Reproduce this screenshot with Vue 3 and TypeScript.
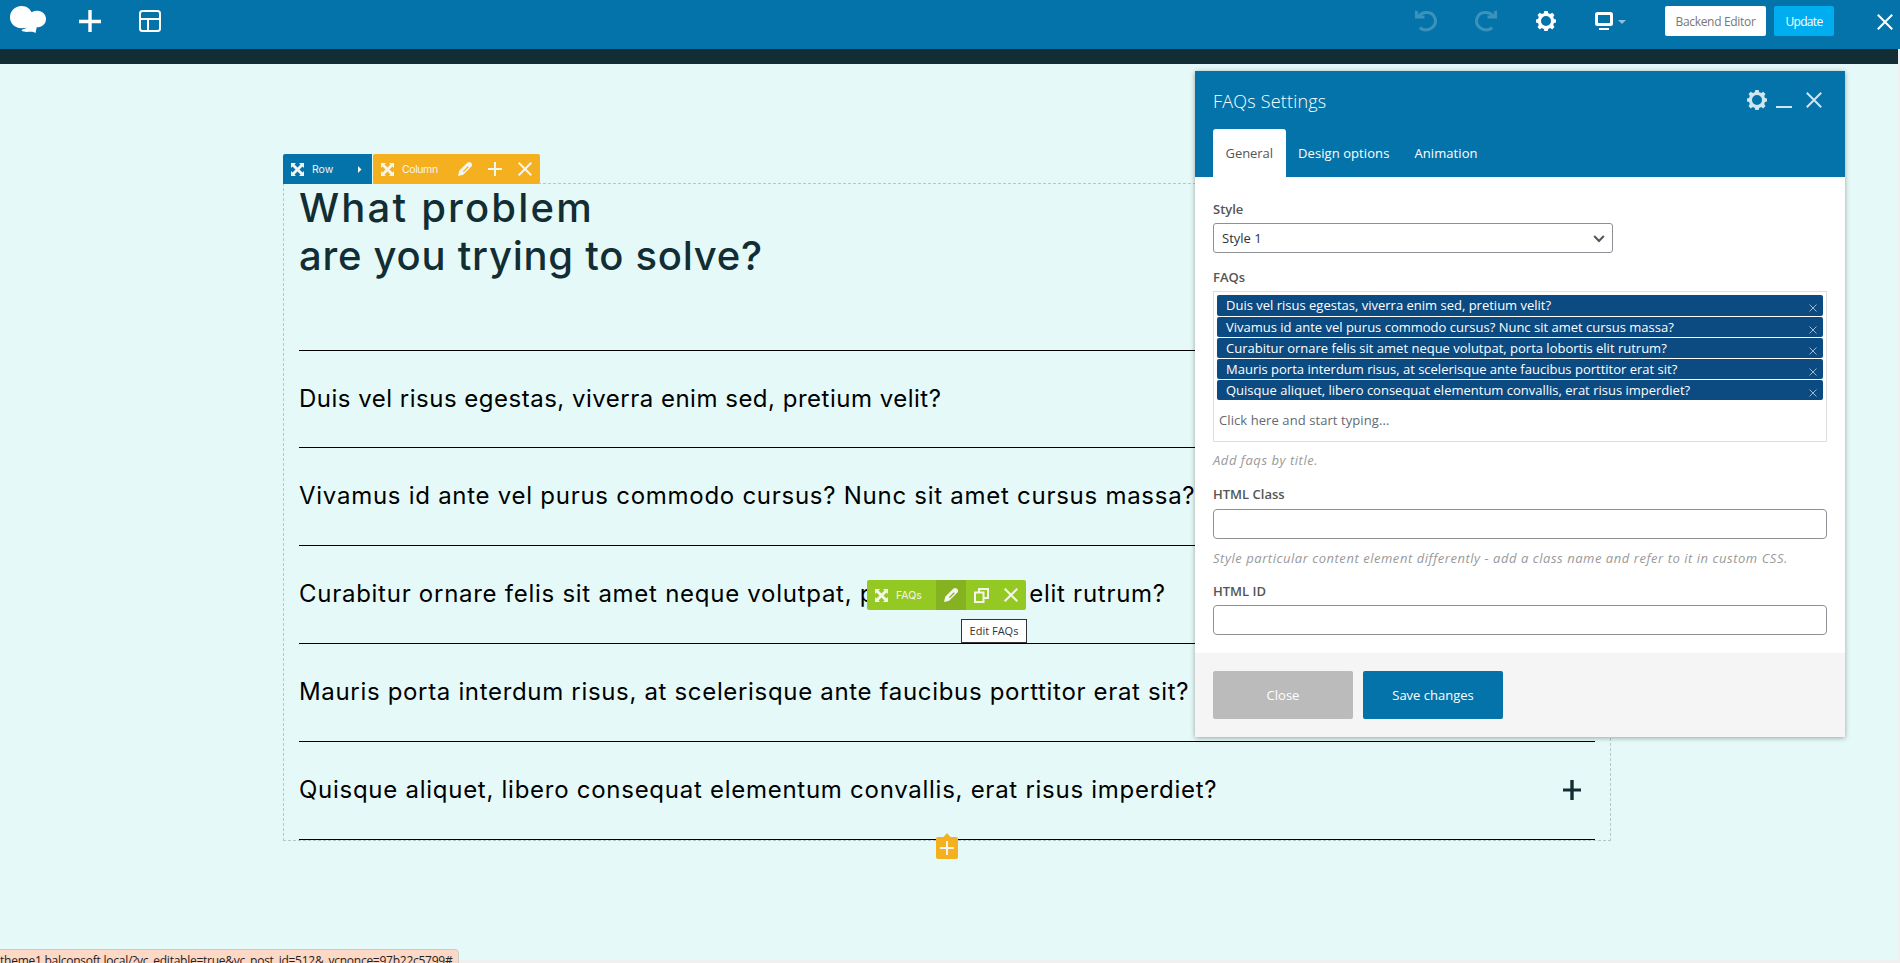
<script setup lang="ts">
import { ref } from 'vue'

const faqs: string[] = [
  'Duis vel risus egestas, viverra enim sed, pretium velit?',
  'Vivamus id ante vel purus commodo cursus? Nunc sit amet cursus massa?',
  'Curabitur ornare felis sit amet neque volutpat, porta lobortis elit rutrum?',
  'Mauris porta interdum risus, at scelerisque ante faucibus porttitor erat sit?',
  'Quisque aliquet, libero consequat elementum convallis, erat risus imperdiet?',
]
const tabs: string[] = ['General', 'Design options', 'Animation']
const activeTab = ref('General')

const gear =
  'M8.3 0h3.4l.5 2.3 2 .8 2-1.3 2.3 2.3-1.3 2 .8 2 2 .5v2.8l-2 .6-.8 2 1.3 2.1-2.3 2.3-2-1.3-2 .8-.5 2.1H8.3l-.5-2.1-2-.8-2 1.3-2.3-2.3 1.3-2.1-.8-2L0 11.400V8.600l2-.5.8-2-1.300-2 2.300-2.300 2 1.300 2-.8zM10 5a5 5 0 1 0 0 10a5 5 0 0 0 0-10z'
const move =
  'M0 0h5L3.500 1.500 6.500 4.500 9.500 1.500 8 0h5v5L11.500 3.500 8.500 6.500 11.500 9.500 13 8v5H8L9.500 11.500 6.500 8.500 3.500 11.500 5 13H0V8L1.500 9.500 4.500 6.500 1.500 3.500 0 5z'
const pencil =
  'M0 14l1.200-5.200L9 1Q11.300-.9 13.200.9T13 5L5.200 12.800zM4.900 9.200l.9.900 4.900-4.900-.9-.9z'
</script>

<template>
  <div class="screen">
    <header class="navbar">
      <svg class="logo" width="36" height="27" viewBox="0 0 36 27">
        <path d="M11.500 0C17 0 20 3 21.500 6.200 23.500 5 25.500 4.700 27.500 4.700c5 0 8.500 3.800 8.500 8.200 0 5-4 8.300-9.300 8.300L25.500 27c-1.500-1-3.500-1.400-6-1.200-3.500.3-6.500 0-8-1.300 1-1.500 3.500-1.300 5-2.700-1.300.3-3 .4-5 .4C4.500 22.200 0 17 0 11.200 0 5 5 0 11.500 0z" />
      </svg>
      <svg class="add" width="22" height="22" viewBox="0 0 22 22"><path d="M11 0v22M0 11.500h22" /></svg>
      <svg class="layout" width="22" height="22" viewBox="0 0 22 22">
        <rect x="1" y="1" width="20" height="20" rx="2.500" /><path d="M1 9h20M9 9v12" />
      </svg>
      <div class="right">
        <svg class="faded" width="22" height="22" viewBox="0 0 22 22">
          <path class="line" d="M3 7.600C7 .8 17.500.8 20 8.500c2.500 8-7.500 15-15.200 9.300" /><path class="solid" d="M0 0.500L3.200 1.500V5.500H9.500V8.500H0z" />
        </svg>
        <svg class="faded redo" width="22" height="22" viewBox="0 0 22 22">
          <path class="line" d="M19 7.600C15 .8 4.500.8 2 8.500c-2.500 8 7.500 15 15.200 9.300" /><path class="solid" d="M22 0.500L18.800 1.500V5.500H12.500V8.500H22z" />
        </svg>
        <svg class="settings" width="20" height="20" viewBox="0 0 20 20"><path fill="#fff" fill-rule="evenodd" :d="gear" /></svg>
        <svg class="device" width="32" height="19" viewBox="0 0 32 19">
          <rect x="1.500" y="1.500" width="15" height="11" rx="1" fill="none" stroke="#fff" stroke-width="3" />
          <path fill="#fff" d="M4 16h10v2H4z" /><path fill="#8fc0da" d="M23 8h8l-4 4z" />
        </svg>
        <button class="backend">Backend Editor</button>
        <button class="update">Update</button>
        <svg class="exit" width="16" height="16" viewBox="0 0 16 16"><path d="M.8.8l14.400 14.400M15.200.8L.8 15.200" /></svg>
      </div>
    </header>
    <div class="site-bar"></div>

    <main class="canvas">
      <section class="row">
        <div class="controls row-controls">
          <div class="chip blue">
            <svg width="13" height="13" viewBox="0 0 13 13"><path :d="move" /></svg>
            <span>Row</span>
            <svg class="caret" width="4" height="7" viewBox="0 0 4 7"><path d="M0 0l3.500 3.500L0 7z" /></svg>
          </div>
          <div class="chip amber">
            <svg width="13" height="13" viewBox="0 0 13 13"><path :d="move" /></svg>
            <span class="column-name">Column</span>
            <i class="cell"><svg width="14" height="14" viewBox="0 0 14 14"><path fill-rule="evenodd" :d="pencil" /></svg></i>
            <i class="cell"><svg width="14" height="14" viewBox="0 0 14 14"><path d="M6 0h2v6h6v2H8v6H6V8H0V6h6z" /></svg></i>
            <i class="cell"><svg width="14" height="14" viewBox="0 0 14 14"><path class="stroke" d="M.7.7l12.600 12.600M13.300.7L.7 13.300" /></svg></i>
          </div>
        </div>
        <h1><span class="first">What problem</span><br />are you trying to solve?</h1>
        <ul class="faq-list">
          <li v-for="(q, i) in faqs" :key="i" :class="'q' + i">
            <span>{{ q }}</span>
            <svg width="18" height="20" viewBox="0 0 18 20"><path d="M7.300 0h3.400v8.500H18v3h-7.300V20H7.300v-8.500H0v-3h7.300z" /></svg>
          </li>
        </ul>
        <div class="append"><svg width="22" height="26" viewBox="0 0 22 26">
          <path fill="#f4b01e" d="M2 4h5.500L11 0l3.500 4H20a2 2 0 0 1 2 2v18a2 2 0 0 1-2 2H2a2 2 0 0 1-2-2V6a2 2 0 0 1 2-2z" />
          <path fill="#f5f5f0" d="M10 8h2v6h6v2h-6v6h-2v-6H4v-2h6z" />
        </svg></div>
        <div class="controls faq-controls">
          <div class="chip green">
            <svg width="13" height="13" viewBox="0 0 13 13"><path :d="move" /></svg>
            <span class="faq-name">FAQs</span>
            <i class="cell active"><svg width="14" height="14" viewBox="0 0 14 14"><path fill-rule="evenodd" :d="pencil" /></svg></i>
            <i class="cell"><svg width="15" height="15" viewBox="0 0 15 15"><path class="stroke" d="M1 4.500h8.500V14H1zM5 4V1h9v9h-4" /></svg></i>
            <i class="cell"><svg width="14" height="14" viewBox="0 0 14 14"><path class="stroke" d="M.7.7l12.600 12.600M13.300.7L.7 13.300" /></svg></i>
          </div>
          <div class="tip">Edit FAQs</div>
        </div>
      </section>
    </main>

    <aside class="panel">
      <div class="panel-head">
        <div class="title-line">
          <h2>FAQs Settings</h2>
          <svg width="20" height="20" viewBox="0 0 20 20"><path fill="#cfe5f0" fill-rule="evenodd" :d="gear" /></svg>
          <svg class="min" width="16" height="20" viewBox="0 0 16 20"><path fill="#cfe5f0" d="M0 16h16v2H0z" /></svg>
          <svg class="shut" width="16" height="16" viewBox="0 0 16 16"><path d="M.8.8l14.400 14.400M15.200.8L.8 15.200" /></svg>
        </div>
        <nav>
          <button v-for="t in tabs" :key="t" :class="{ on: t === activeTab }" @click="activeTab = t">{{ t }}</button>
        </nav>
      </div>
      <div class="panel-body">
        <label>Style</label>
        <div class="select">Style 1
          <svg width="12" height="8" viewBox="0 0 12 8"><path d="M1.200 1l4.800 5 4.800-5" /></svg>
        </div>
        <label class="l-faqs">FAQs</label>
        <div class="tokens">
          <div v-for="(q, i) in faqs" :key="i" class="token">
            <span>{{ q }}</span>
            <svg width="8" height="8" viewBox="0 0 8 8"><path d="M.5.5l7 7M7.500.5l-7 7" /></svg>
          </div>
          <div class="placeholder">Click here and start typing...</div>
        </div>
        <p class="hint h-faqs">Add faqs by title.</p>
        <label class="l-class">HTML Class</label>
        <input class="field" />
        <p class="hint h-class">Style particular content element differently - add a class name and refer to it in custom CSS.</p>
        <label class="l-id">HTML ID</label>
        <input class="field" />
      </div>
      <footer>
        <button class="close">Close</button>
        <button class="save">Save changes</button>
      </footer>
    </aside>

    <div class="scroll-v"></div>
    <div class="scroll-h"></div>
    <div class="status">theme1.balconsoft.local/?vc_editable=true&amp;vc_post_id=512&amp;_vcnonce=97b22c5799#</div>
  </div>
</template>

<style>
body { overflow: hidden; }
</style>

<style scoped>
* { box-sizing: border-box; }
.screen { position: relative; width: 1900px; height: 963px; overflow: hidden; background: #e5faf8; font-family: "Open Sans", "Noto Sans", sans-serif; font-size: 13px; }
svg { display: block; flex: none; }
button { border: 0; padding: 0; font: inherit; background: none; }
h1, h2, p, ul { margin: 0; padding: 0; font-weight: 400; }

.navbar { height: 49px; background: #0473aa; display: flex; align-items: flex-start; padding-left: 10px; }
.logo { margin-top: 6px; fill: #fff; }
.add { margin: 10px 0 0 33px; }
.add path { fill: none; stroke: #fff; stroke-width: 3.4; }
.layout { margin: 10px 0 0 38px; fill: none; stroke: #fff; stroke-width: 2; }
.right { margin-left: auto; display: flex; align-items: flex-start; padding-right: 7px; }
.faded { margin-top: 10px; opacity: .22; }
.faded .line { fill: none; stroke: #fff; stroke-width: 3; }
.faded .solid { fill: #fff; }
.redo { margin-left: 38px; }
.settings { margin: 11px 0 0 39px; }
.device { margin: 12px 0 0 39px; }
.backend, .update { margin-top: 6px; height: 30px; border-radius: 2px; font-size: 12px; }
.backend { width: 101px; margin-left: 38px; background: #fff; color: #777; letter-spacing: -.32px; }
.update { width: 60px; margin-left: 8px; background: #00aef0; color: #fff; letter-spacing: -.7px; }
.exit { margin: 14px 0 0 43px; }
.exit path, .shut path { fill: none; stroke: #fff; stroke-width: 2; }
.site-bar { height: 15px; background: #122e34; }

.canvas { padding: 119px 0 0 283px; }
.row { position: relative; width: 1328px; height: 658px; border: 1px dashed #b4c9c8; padding: 0 15px; }
.controls { position: absolute; font-family: Inter, sans-serif; font-size: 10.500px; }
.row-controls { left: -1px; top: -30px; display: flex; gap: 1px; }
.chip { height: 30px; display: flex; align-items: center; padding-left: 8px; color: #f5f5f0; border-radius: 2px; }
.chip svg { fill: #f5f5f0; }
.chip span { flex: none; margin-left: 8px; }
.chip .stroke { fill: none; stroke: #f5f5f0; stroke-width: 2; }
.blue { width: 89px; background: #0473aa; border-radius: 2px 0 0 0; }
.chip .caret { margin-left: auto; margin-right: 10px; }
.amber { width: 167px; background: #f4b01e; }
.column-name { width: 48px; letter-spacing: -.4px; }
.cell { flex: none; width: 30px; height: 30px; display: flex; align-items: center; justify-content: center; }
.faq-controls { left: 583px; top: 396px; }
.green { width: 159px; background: #94c924; }
.faq-name { width: 40px; }
.active { background: #84b221; }
.tip { position: absolute; right: -1px; top: 39px; width: 66px; height: 24px; border: 1px solid #333; background: #fff; color: #333; font: 11px/22px "Open Sans", sans-serif; text-align: center; white-space: nowrap; }
h1 { height: 166px; font: 500 40px/48px Inter, sans-serif; color: #122e34; letter-spacing: .75px; }
.first { letter-spacing: 2.200px; }
.faq-list { list-style: none; border-top: 1px solid #000; }
.faq-list li { height: 98px; border-bottom: 1px solid #000; display: flex; align-items: center; justify-content: space-between; padding: 0 14px 1px 0; font: 24px/30px Inter, sans-serif; color: #000; white-space: nowrap; }
.faq-list .q0 { height: 97px; letter-spacing: .5px; }
.faq-list .q1, .faq-list .q2, .faq-list .q4 { letter-spacing: .73px; }
.faq-list .q3 { letter-spacing: .67px; }
.faq-list svg { fill: #122e34; }
.append { position: absolute; left: 652px; top: 649px; }

.panel { position: absolute; left: 1195px; top: 71px; width: 650px; height: 666px; background: #fff; box-shadow: 0 1px 5px rgba(0, 0, 0, .35); color: #555; }
.panel-head { height: 106px; background: #0473aa; padding: 0 18px; }
.title-line { height: 58px; display: flex; align-items: center; padding-right: 5px; }
h2 { flex: 1; font-size: 18px; font-weight: 300; color: #fff; letter-spacing: .2px; padding-top: 2px; }
.min { margin-left: 9px; }
.shut { margin-left: 14px; }
.shut path { stroke: #cfe5f0; }
nav { display: flex; }
nav button { height: 48px; padding: 0 12.500px; color: #fff; border-radius: 3px 3px 0 0; letter-spacing: .08px; }
nav .on { background: #fff; color: #555; letter-spacing: -.05px; }
.panel-body { height: 476px; padding: 22px 18px 0; }
label { display: block; height: 24px; line-height: 20px; font-weight: 600; }
.select { width: 400px; height: 30px; border: 1px solid #8c8f94; border-radius: 3px; padding: 0 7px 0 8px; display: flex; align-items: center; justify-content: space-between; color: #2c3338; }
.select svg { margin-top: 2px; fill: none; stroke: #555; stroke-width: 2; }
.l-faqs { margin-top: 14px; }
.tokens { height: 151px; border: 1px solid #ddd; padding: 3px; }
.token { height: 20px; margin-bottom: 1px; padding: 0 6px 0 9px; background: #0c4b82; color: #fff; border-radius: 2px; display: flex; justify-content: space-between; align-items: center; white-space: nowrap; }
.token:first-child { height: 21px; padding-bottom: 1px; }
.token svg { margin-top: 5px; fill: none; stroke: #9db7cd; }
.placeholder { margin: 10px 0 0 2px; line-height: 20px; color: #646970; letter-spacing: .08px; }
.hint { height: 20px; line-height: 20px; color: #999; font-style: italic; white-space: nowrap; letter-spacing: .54px; }
.h-faqs { margin-top: 8px; }
.l-class { margin-top: 14px; height: 25px; }
.field { display: block; width: 614px; height: 30px; border: 1px solid #8c8f94; border-radius: 4px; background: #fff; }
.h-class { margin-top: 9px; }
.l-id { margin-top: 13px; }
footer { height: 84px; background: #f5f5f5; padding: 18px; display: flex; gap: 10px; }
footer button { width: 140px; height: 48px; border-radius: 2px; color: #fff; }
.close { background: #bbb; }
.save { background: #0473aa; }

.scroll-v { position: absolute; right: 0; top: 49px; width: 2px; height: 914px; background: #f0f0f0; }
.scroll-h { position: absolute; left: 0; top: 960px; width: 1900px; height: 3px; background: #f0f0f0; }
.status { position: absolute; left: -1px; top: 949px; width: 460px; height: 24px; border: 1px solid #c8cdca; border-radius: 0 4px 0 0; background: #fdd8c6; color: #222; font-size: 12px; line-height: 21px; letter-spacing: -.25px; white-space: nowrap; }
</style>
